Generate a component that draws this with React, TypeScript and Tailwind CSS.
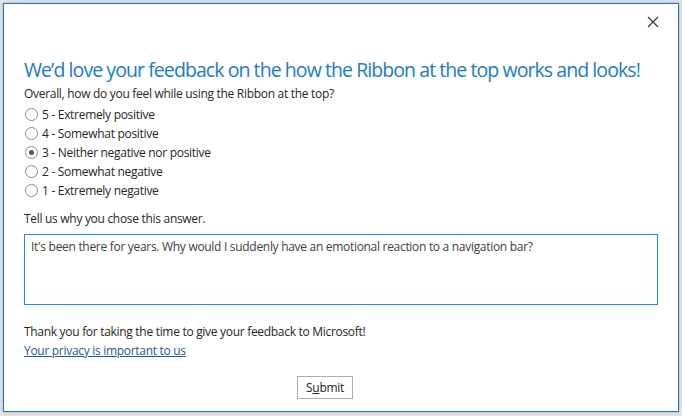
import { useState } from "react";

const options = [
    "5 - Extremely positive",
    "4 - Somewhat positive",
    "3 - Neither negative nor positive",
    "2 - Somewhat negative",
    "1 - Extremely negative",
];

function Radio(props: { label: string; checked: boolean; onSelect: () => void }) {
    const { label, checked, onSelect } = props;
    return (
        <label className="flex items-center h-[19px] cursor-default" onClick={onSelect}>
            <span className="w-[13px] h-[13px] ml-[1px] rounded-full border border-[#8a8a8a] bg-white flex items-center justify-center">
                {checked && <span className="w-[5px] h-[5px] rounded-full bg-[#555]"></span>}
            </span>
            <span className="ml-[4px]">{label}</span>
        </label>
    );
}

export default function App() {
    const [choice, setChoice] = useState(2);

    return (
        <div className="w-[682px] h-[416px] bg-[#e6e6e6] pt-[3px] pl-[3px] overflow-hidden" style={{ fontFamily: '"Open Sans", "Noto Sans", sans-serif' }}>
            <div className="w-[676px] h-[409px] border border-[#1979ca] bg-white flex flex-col shadow-[0_0_4px_rgba(0,0,0,0.25)]">
                {/* Title bar */}
                <div className="h-[52px] flex justify-end items-start pr-[17px] pt-[10px]">
                    <button className="w-[16px] h-[16px] flex items-center justify-center text-[#333]">
                        <svg width="12" height="12" viewBox="0 0 12 12" fill="none" stroke="currentColor" strokeWidth="1.1">
                            <path d="M1 1 L11 11 M11 1 L1 11" />
                        </svg>
                    </button>
                </div>

                <div className="px-[20px] text-[12px] tracking-[-0.3px] text-[#262626] flex flex-col">
                    <h1 className="text-[19.5px] leading-[28px] tracking-[-0.93px] whitespace-nowrap text-[#1a7bc9] font-normal">
                        We’d love your feedback on the how the Ribbon at the top works and looks!
                    </h1>
                    <p className="leading-[19px]">Overall, how do you feel while using the Ribbon at the top?</p>

                    <div className="mt-[2px] flex flex-col">
                        {options.map((o, i) => (
                            <Radio key={o} label={o} checked={choice === i} onSelect={() => setChoice(i)} />
                        ))}
                    </div>

                    <p className="mt-[9px] leading-[19px]">Tell us why you chose this answer.</p>
                    <textarea
                        className="mt-[6px] w-[634px] h-[71px] border border-[#1e88e5] px-[6px] py-[2px] text-[12px] leading-[19px] tracking-[-0.3px] text-[#404040] resize-none outline-none"
                        defaultValue="It's been there for years. Why would I suddenly have an emotional reaction to a navigation bar?"
                    />

                    <p className="mt-[17px] leading-[19px]">Thank you for taking the time to give your feedback to Microsoft!</p>
                    <a href="#" className="leading-[19px] text-[#1d5a93] underline w-fit">Your privacy is important to us</a>

                    <div className="mt-[16px] flex">
                        <button className="ml-[273px] w-[56px] h-[23px] border border-[#adadad] bg-white text-[12px] text-[#262626] leading-none">
                            S<span className="underline">u</span>bmit
                        </button>
                    </div>
                </div>
            </div>
        </div>
    );
}
